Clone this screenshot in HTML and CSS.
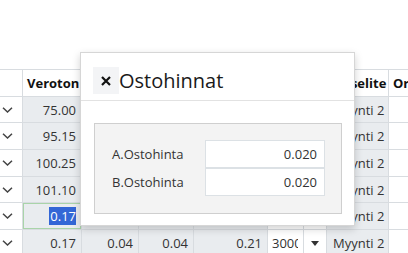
FILE: index.html
```html
<!DOCTYPE html>
<html lang="fi">
<head>
  <meta charset="UTF-8">
  <title>Ostohinnat</title>
  <link rel="stylesheet" href="styles.css">
</head>
<body>
<div class="page">
  <div class="grid">
    <div class="cell head"></div>
    <div class="cell head">Veroton</div>
    <div class="cell head"></div>
    <div class="cell head"></div>
    <div class="cell head"></div>
    <div class="cell head"></div>
    <div class="cell head"></div>
    <div class="cell head tight">Riviselite</div>
    <div class="cell head">Orig</div>

    <div class="cell chev"><svg width="11" height="6" viewBox="0 0 11 6"><path d="M1 0.8 L5.5 5 L10 0.8" fill="none" stroke="#444" stroke-width="1.5"/></svg></div>
    <div class="cell num ro">75.00</div>
    <div class="cell num ro"></div>
    <div class="cell num ro"></div>
    <div class="cell num ro"></div>
    <div class="cell"></div>
    <div class="cell"></div>
    <div class="cell ro">Myynti 2</div>
    <div class="cell"></div>

    <div class="cell chev"><svg width="11" height="6" viewBox="0 0 11 6"><path d="M1 0.8 L5.5 5 L10 0.8" fill="none" stroke="#444" stroke-width="1.5"/></svg></div>
    <div class="cell num ro">95.15</div>
    <div class="cell num ro"></div>
    <div class="cell num ro"></div>
    <div class="cell num ro"></div>
    <div class="cell"></div>
    <div class="cell"></div>
    <div class="cell ro">Myynti 2</div>
    <div class="cell"></div>

    <div class="cell chev"><svg width="11" height="6" viewBox="0 0 11 6"><path d="M1 0.8 L5.5 5 L10 0.8" fill="none" stroke="#444" stroke-width="1.5"/></svg></div>
    <div class="cell num ro">100.25</div>
    <div class="cell num ro"></div>
    <div class="cell num ro"></div>
    <div class="cell num ro"></div>
    <div class="cell"></div>
    <div class="cell"></div>
    <div class="cell ro">Myynti 2</div>
    <div class="cell"></div>

    <div class="cell chev"><svg width="11" height="6" viewBox="0 0 11 6"><path d="M1 0.8 L5.5 5 L10 0.8" fill="none" stroke="#444" stroke-width="1.5"/></svg></div>
    <div class="cell num ro">101.10</div>
    <div class="cell num ro"></div>
    <div class="cell num ro"></div>
    <div class="cell num ro"></div>
    <div class="cell"></div>
    <div class="cell"></div>
    <div class="cell ro">Myynti 2</div>
    <div class="cell"></div>

    <div class="cell chev"><svg width="11" height="6" viewBox="0 0 11 6"><path d="M1 0.8 L5.5 5 L10 0.8" fill="none" stroke="#444" stroke-width="1.5"/></svg></div>
    <div class="cell num ro active"><span class="sel">0.17</span></div>
    <div class="cell num ro"></div>
    <div class="cell num ro"></div>
    <div class="cell num ro"></div>
    <div class="cell"></div>
    <div class="cell"></div>
    <div class="cell ro">Myynti 2</div>
    <div class="cell"></div>

    <div class="cell chev"><svg width="11" height="6" viewBox="0 0 11 6"><path d="M1 0.8 L5.5 5 L10 0.8" fill="none" stroke="#444" stroke-width="1.5"/></svg></div>
    <div class="cell num ro">0.17</div>
    <div class="cell num ro">0.04</div>
    <div class="cell num ro">0.04</div>
    <div class="cell num ro">0.21</div>
    <div class="cell qty"><span class="qty-text">3000</span></div>
    <div class="cell drop"><svg width="8" height="5" viewBox="0 0 8 5"><path d="M0 0 H8 L4 5 Z" fill="#333"/></svg></div>
    <div class="cell ro">Myynti 2</div>
    <div class="cell"></div>
  </div>

  <div class="dialog">
    <div class="dialog-head">
      <span class="close"><svg width="10" height="10" viewBox="0 0 10 10"><path d="M1 1 L9 9 M9 1 L1 9" stroke="#111" stroke-width="2.2"/></svg></span>
      <span class="title">Ostohinnat</span>
    </div>
    <div class="dialog-body">
      <div class="panel">
        <div class="field">
          <label>A.Ostohinta</label>
          <div class="input">0.020</div>
        </div>
        <div class="field">
          <label>B.Ostohinta</label>
          <div class="input">0.020</div>
        </div>
      </div>
    </div>
  </div>
</div>
</body>
</html>
```

FILE: styles.css
```css
* {
  margin: 0;
  padding: 0;
  box-sizing: border-box;
}

body {
  font-family: "Open Sans", "Liberation Sans", sans-serif;
  font-size: 13px;
  color: #333;
  background: #fff;
}

.page {
  position: relative;
  width: 408px;
  height: 253px;
  padding-top: 69px;
  overflow: hidden;
}

.grid {
  display: grid;
  grid-template-columns: 23px 59px 57px 55px 74px 36px 23px 62px 60px;
  grid-template-rows: 27px 26px 27px 27px 26px 27px 27px;
  border-top: 1px solid #d8dce0;
  width: 455px;
}

.cell {
  border-right: 1px solid #d8dce0;
  border-bottom: 1px solid #d8dce0;
  display: flex;
  align-items: center;
  padding: 0 5px;
  white-space: nowrap;
  overflow: hidden;
  background: #fff;
}

.head {
  font-weight: bold;
  color: #111;
  padding-left: 4px;
}

.head.tight {
  padding-left: 0;
}

.ro {
  background: #e9ecef;
  padding-left: 6px;
}

.num {
  justify-content: flex-end;
  padding-right: 5px;
}

.chev {
  padding: 0 0 0 2px;
}

.active {
  box-shadow: inset 0 0 0 1px #a9d4a9;
}

.sel {
  background: #3367d6;
  color: #fff;
  padding: 0 0 0 1px;
}

.qty {
  padding-left: 4px;
}

.qty-text {
  display: block;
  width: 28px;
  overflow: hidden;
}

.drop {
  justify-content: center;
  padding: 0;
}

.dialog {
  position: absolute;
  left: 80px;
  top: 52px;
  width: 275px;
  height: 174px;
  background: #fff;
  border: 1px solid #d6d6d6;
  box-shadow: 0 3px 8px rgba(0, 0, 0, 0.18);
}

.dialog-head {
  height: 48px;
  border-bottom: 1px solid #e2e2e2;
  display: flex;
  align-items: flex-start;
  padding: 14px 0 0 12px;
}

.close {
  width: 26px;
  height: 27px;
  background: #f3f4f6;
  display: flex;
  align-items: center;
  justify-content: center;
  padding-top: 1px;
}

.title {
  font-size: 20px;
  color: #1a1a1a;
  line-height: 27px;
}

.dialog-body {
  padding: 22px 12px 0 13px;
}

.panel {
  height: 91px;
  background: #f3f3f3;
  border: 1px solid #cfcfcf;
  padding: 16px 16px 0 17px;
}

.field {
  display: flex;
  align-items: center;
  height: 28px;
}

.field label {
  flex: 1;
  color: #333;
}

.input {
  width: 120px;
  height: 28px;
  background: #fff;
  border: 1px solid #dce1e5;
  text-align: right;
  line-height: 26px;
  padding-right: 7px;
}
```
